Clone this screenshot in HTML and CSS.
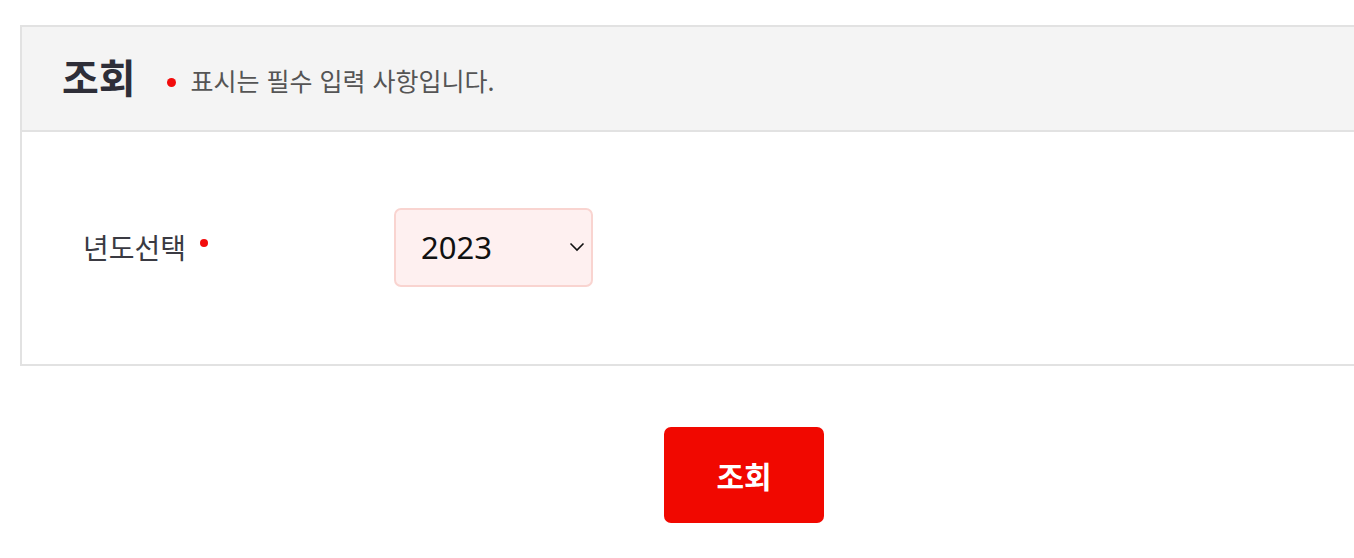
FILE: index.html
```html
<!DOCTYPE html>
<html lang="ko">
<head>
<meta charset="utf-8">
<title>조회</title>
<link rel="stylesheet" href="styles.css">
</head>
<body>
<div class="page">
  <section class="search-box">
    <div class="search-head">
      <h2 class="search-title">조회</h2>
      <p class="required-note"><span class="req-dot"></span>표시는 필수 입력 사항입니다.</p>
    </div>
    <div class="search-body">
      <div class="field-row">
        <label class="field-label" for="year">년도선택<span class="req-dot small"></span></label>
        <div class="select-wrap">
          <select id="year" class="year-select">
            <option>2023</option>
            <option>2022</option>
            <option>2021</option>
          </select>
          <svg class="chevron" viewBox="0 0 16 10" width="16" height="10" aria-hidden="true">
            <path d="M1.5 1.5 L8 8 L14.5 1.5" fill="none" stroke="#111" stroke-width="1.6"/>
          </svg>
        </div>
      </div>
    </div>
  </section>
  <div class="actions">
    <button type="button" class="btn-search">조회</button>
  </div>
</div>
</body>
</html>
```
FILE: styles.css
```css
html, body {
  margin: 0;
  padding: 0;
  background: #ffffff;
  overflow: hidden;
}
body {
  font-family: "Noto Sans CJK KR", "Noto Sans", sans-serif;
  color: #333;
}
.page {
  width: 1448px;
  margin: 25px 0 0 20px;
}
.search-box {
  border: 2px solid #e2e2e2;
  border-right: none;
}
.search-head {
  display: flex;
  align-items: center;
  height: 103px;
  padding-left: 40px;
  background: #f4f4f4;
  border-bottom: 2px solid #e2e2e2;
}
.search-title {
  margin: 0;
  font-size: 40px;
  font-weight: 700;
  color: #2e2e38;
  letter-spacing: 0;
  line-height: 1;
  position: relative;
  top: -3px;
}
.required-note {
  margin: 0 0 0 31px;
  display: flex;
  align-items: center;
  font-size: 25px;
  color: #555;
  letter-spacing: 0;
  line-height: 1;
  position: relative;
  top: 2px;
}
.req-dot {
  display: inline-block;
  width: 9px;
  height: 9px;
  border-radius: 50%;
  background: #f20c0c;
  margin: 4px 15px 0 0;
}
.req-dot.small {
  width: 8px;
  height: 8px;
  margin: 0 0 8px 14px;
}
.search-body {
  height: 232px;
  display: flex;
  align-items: center;
}
.field-row {
  display: flex;
  align-items: center;
  padding-left: 61px;
  position: relative;
  top: -1px;
}
.field-label {
  width: 311px;
  display: flex;
  align-items: center;
  font-size: 28px;
  color: #3a3a42;
  letter-spacing: 0;
}
.select-wrap {
  position: relative;
  width: 199px;
  height: 79px;
}
.year-select {
  appearance: none;
  -webkit-appearance: none;
  width: 100%;
  height: 100%;
  box-sizing: border-box;
  border: 2px solid #f9d4d0;
  border-radius: 7px;
  background: #fef0f0;
  padding: 0 0 0 25px;
  font-family: "Noto Sans", "Noto Sans CJK KR", sans-serif;
  font-size: 31px;
  color: #111;
  outline: none;
}
.chevron {
  position: absolute;
  right: 8px;
  top: 34px;
  width: 16px;
  height: 10px;
  pointer-events: none;
}
.actions {
  display: flex;
  justify-content: center;
  padding-top: 61px;
}
.btn-search {
  width: 160px;
  height: 96px;
  border: none;
  border-radius: 7px;
  background: #f10800;
  color: #fff;
  font-family: "Noto Sans CJK KR", "Noto Sans", sans-serif;
  font-size: 30px;
  font-weight: 700;
  letter-spacing: 0;
  cursor: pointer;
}
```
